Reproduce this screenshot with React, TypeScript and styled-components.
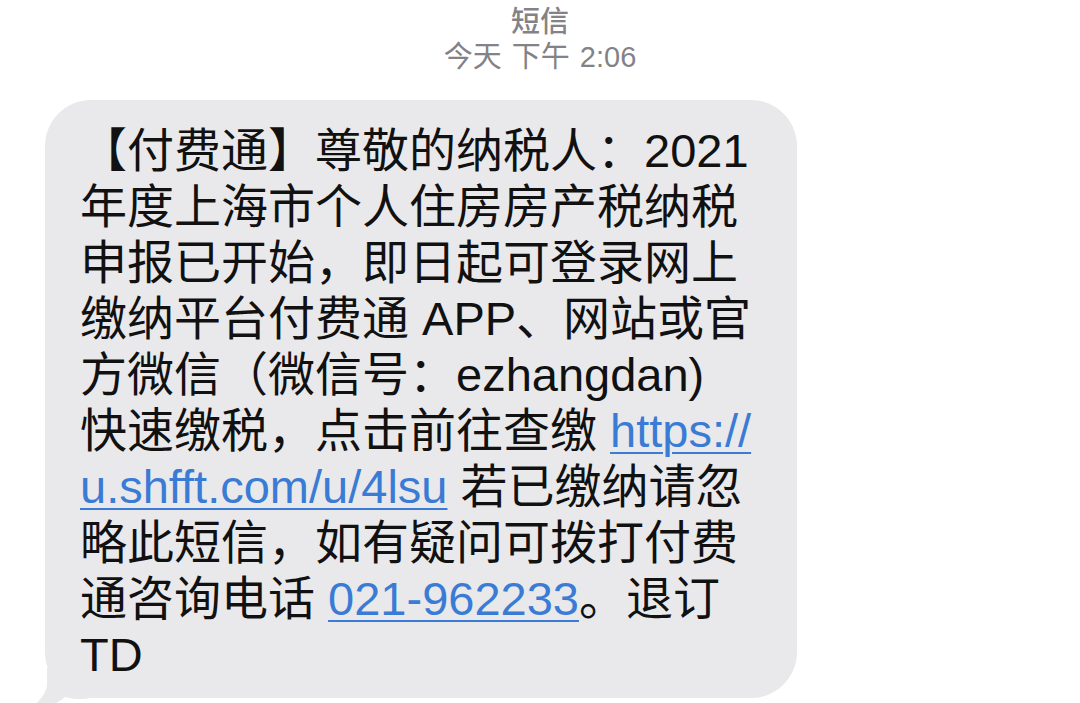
import React from 'react';
import styled, { createGlobalStyle } from 'styled-components';

const GlobalStyle = createGlobalStyle`
  html, body {
    margin: 0;
    padding: 0;
    background: #ffffff;
  }
  body {
    font-family: "Liberation Sans", "Noto Sans CJK SC", sans-serif;
  }
`;

const Page = styled.div`
  width: 1080px;
  height: 703px;
  overflow: hidden;
  display: flex;
  flex-direction: column;
`;

const Header = styled.div`
  display: flex;
  flex-direction: column;
  align-items: center;
  padding-top: 5px;
  color: #838387;
  font-size: 29px;
  line-height: 35px;
`;

const Title = styled.div`
  font-weight: 500;
`;

const Stamp = styled.div`
  word-spacing: 2px;
`;

const Row = styled.div`
  display: flex;
  padding-left: 45px;
  margin-top: 25px;
`;

const Bubble = styled.div`
  position: relative;
  width: 752px;
  box-sizing: border-box;
  padding: 23px 20px 15px 35px;
  background: #e9e9eb;
  border-radius: 46px;
  color: #111111;
  font-size: 47px;
  line-height: 56px;
`;

const Tail = styled.svg`
  position: absolute;
  left: -14px;
  bottom: -10px;
`;

const Line = styled.div`
  height: 56px;
  white-space: nowrap;
`;

const Link = styled.span`
  color: #3a7bd5;
  text-decoration: underline;
  text-decoration-thickness: 2px;
  text-underline-offset: 5px;
`;

const lines: React.ReactNode[] = [
  '【付费通】尊敬的纳税人：2021',
  '年度上海市个人住房房产税纳税',
  '申报已开始，即日起可登录网上',
  '缴纳平台付费通 APP、网站或官',
  '方微信（微信号：ezhangdan)',
  <>快速缴税，点击前往查缴 <Link>https://</Link></>,
  <><Link>u.shfft.com/u/4lsu</Link> 若已缴纳请忽</>,
  '略此短信，如有疑问可拨打付费',
  <>通咨询电话 <Link>021-962233</Link>。退订</>,
  'TD',
];

export default function App() {
  return (
    <Page>
      <GlobalStyle />
      <Header>
        <Title>短信</Title>
        <Stamp>今天 下午 2:06</Stamp>
      </Header>
      <Row>
        <Bubble>
          {lines.map((line, i) => (
            <Line key={i}>{line}</Line>
          ))}
          <Tail width="60" height="40" viewBox="0 0 60 40">
            <path
              d="M16 0 L16 16 C16 24 10 32 0 40 C14 40 26 36 34 29 C40 31 50 32 60 30 L60 0 Z"
              fill="#e9e9eb"
            />
          </Tail>
        </Bubble>
      </Row>
    </Page>
  );
}
